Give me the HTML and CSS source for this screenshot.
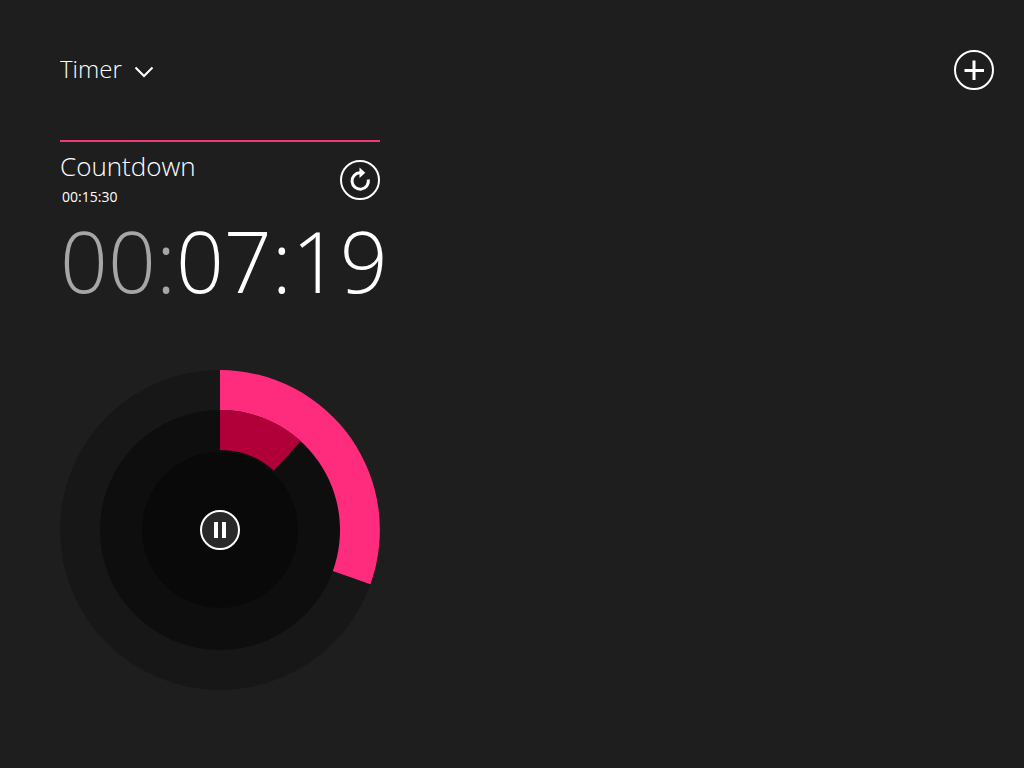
FILE: index.html
```html
<!DOCTYPE html>
<html lang="en">
<head>
<meta charset="utf-8">
<meta name="viewport" content="width=device-width, initial-scale=1">
<title>Timer</title>
<link rel="stylesheet" href="styles.css">
</head>
<body>
<header class="topbar">
  <div class="view-picker">
    <select class="view-select" aria-label="View">
      <option>Timer</option>
    </select>
    <svg class="chevron" viewBox="0 0 20 12" aria-hidden="true"><path d="M1.500 1.500 10 10 18.500 1.500"/></svg>
  </div>
  <button class="round-button" type="button" aria-label="Add timer">
    <svg viewBox="0 0 40 40" aria-hidden="true"><path class="plus" d="M20 10.500V30M10.500 20.500H30"/></svg>
  </button>
</header>
<main class="timers">
  <section class="timer">
    <div class="timer-head">
      <div class="timer-titles">
        <h2 class="timer-name">Countdown</h2>
        <p class="timer-length">00:15:30</p>
      </div>
      <button class="round-button" type="button" aria-label="Restart">
        <svg viewBox="0 0 40 40" aria-hidden="true"><path class="restart" d="M28.300 19.500A8.200 8.200 0 1 1 20 12.800"/><path class="fill" d="M19.500 7.500 25.300 12.800 19.500 18Z"/></svg>
      </button>
    </div>
    <p class="remaining"><span class="idle">00:</span>07:19</p>
    <div class="dial">
      <svg class="rings" viewBox="0 0 320 320" aria-hidden="true">
        <circle class="ring-outer" cx="160" cy="160" r="160"/>
        <circle class="ring-middle" cx="160" cy="160" r="120"/>
        <circle class="ring-inner" cx="160" cy="160" r="78"/>
        <path class="arc-seconds" d="M160 0A160 160 0 0 1 310.400 214.300L272.800 201A120 120 0 0 0 160 40Z"/>
        <path class="arc-minutes" d="M160 40A120 120 0 0 1 240.800 71.300L213.900 100.800A80 80 0 0 0 160 80Z"/>
      </svg>
      <button class="round-button pause" type="button" aria-label="Pause">
        <svg viewBox="0 0 40 40" aria-hidden="true"><path class="fill" d="M14 12H18V28H14ZM22 12H26V28H22Z"/></svg>
      </button>
    </div>
  </section>
</main>
</body>
</html>
```
FILE: styles.css
```css
* { box-sizing: border-box; }

body {
  margin: 0;
  min-height: 100vh;
  padding: 50px 30px 50px 60px;
  background: #1e1e1e;
  color: #fff;
  font-family: "Open Sans", "Noto Sans", sans-serif;
}

.topbar {
  display: flex;
  align-items: center;
  justify-content: space-between;
  margin-bottom: 50px;
}

.view-picker {
  display: grid;
  align-items: center;
}

.view-select,
.chevron { grid-area: 1 / 1; }

.view-select {
  appearance: none;
  margin: 0;
  padding: 0 32px 2px 0;
  border: 0;
  background: transparent;
  color: inherit;
  font: 300 24px/38px "Open Sans", "Noto Sans", sans-serif;
}

.chevron {
  justify-self: end;
  width: 20px;
  height: 12px;
  margin-top: 4px;
  pointer-events: none;
  fill: none;
  stroke: #fff;
  stroke-width: 2;
}

.round-button {
  display: block;
  flex: none;
  width: 40px;
  height: 40px;
  padding: 0;
  border: 2px solid #fff;
  border-radius: 50%;
  background: transparent;
}

.round-button svg {
  display: block;
  width: 40px;
  height: 40px;
  margin: -2px;
}

.plus,
.restart {
  fill: none;
  stroke: #fff;
  stroke-width: 3;
}

.fill { fill: #fff; }

.timer {
  max-width: 320px;
  border-top: 2px solid #ed3a76;
}

.timer-head {
  display: flex;
  justify-content: space-between;
  padding-top: 8px;
}

.timer-head .round-button { margin-top: 10px; }

.timer-name,
.timer-length,
.remaining { margin: 0; }

.timer-name {
  font-size: 26px;
  font-weight: 300;
  line-height: 32px;
}

.timer-length {
  padding-left: 2px;
  font-size: 14px;
  line-height: 30px;
}

.remaining {
  font-size: 84px;
  font-weight: 300;
  line-height: 98px;
  margin-bottom: 60px;
  white-space: nowrap;
}

.idle { color: #a6a6a6; }

.dial {
  display: grid;
  place-items: center;
}

.rings,
.pause { grid-area: 1 / 1; }

.rings {
  display: block;
  width: 100%;
}

.pause {
  z-index: 1;
  background: #292929;
}

.ring-outer { fill: #171717; }
.ring-middle { fill: #0e0e0e; }
.ring-inner { fill: #090909; }
.arc-seconds { fill: #ff2b7c; }
.arc-minutes { fill: #b10039; }
```
